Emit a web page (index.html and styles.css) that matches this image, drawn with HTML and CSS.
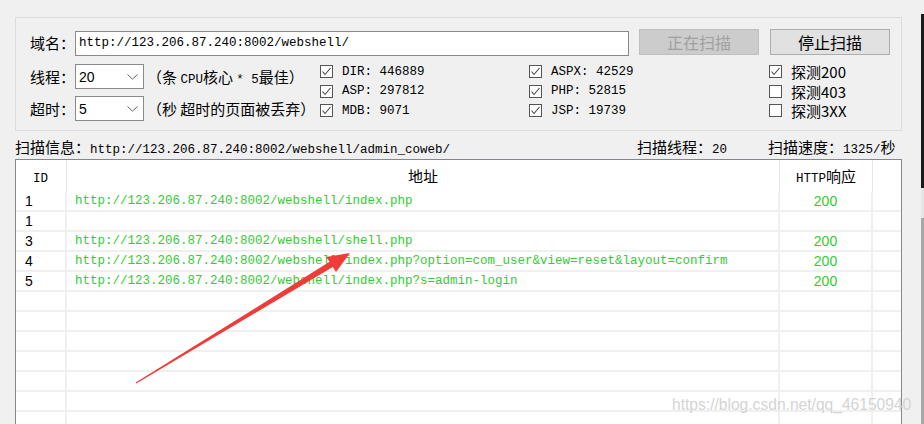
FILE: index.html
```html
<!DOCTYPE html>
<html lang="zh-CN">
<head>
    <meta charset="UTF-8">
    <meta name="viewport" content="width=device-width, initial-scale=1.0">
    <title>后台扫描</title>
    <link rel="stylesheet" href="styles.css">
</head>
<body>
    <div class="app">
        <div class="main">
            <!-- 扫描设置 -->
            <div class="group">
                <div class="row-top">
                    <span class="label">域名：</span>
                    <div class="url-input">http://123.206.87.240:8002/webshell/</div>
                    <button class="btn btn-disabled">正在扫描</button>
                    <button class="btn btn-stop">停止扫描</button>
                </div>
                <div class="row-options">
                    <div class="settings">
                        <div class="setting">
                            <span class="label">线程：</span>
                            <div class="combo">
                                <span>20</span>
                                <svg width="11" height="6" viewBox="0 0 11 6"><polyline points="0.5,0.5 5.5,5 10.5,0.5" fill="none" stroke="#606060" stroke-width="1"/></svg>
                            </div>
                            <span class="note">（条 <span class="mono">CPU</span>核心 <span class="mono">* 5</span>最佳）</span>
                        </div>
                        <div class="setting">
                            <span class="label">超时：</span>
                            <div class="combo">
                                <span>5</span>
                                <svg width="11" height="6" viewBox="0 0 11 6"><polyline points="0.5,0.5 5.5,5 10.5,0.5" fill="none" stroke="#606060" stroke-width="1"/></svg>
                            </div>
                            <span class="note">（秒 超时的页面被丢弃）</span>
                        </div>
                    </div>
                    <div class="checks">
                        <label class="check"><span class="box"><svg width="11" height="11" viewBox="0 0 11 11"><polyline points="1.5,5.5 4,8.5 9.5,2" fill="none" stroke="#444" stroke-width="1.1"/></svg></span><span class="mono">DIR: 446889</span></label>
                        <label class="check"><span class="box"><svg width="11" height="11" viewBox="0 0 11 11"><polyline points="1.5,5.5 4,8.5 9.5,2" fill="none" stroke="#444" stroke-width="1.1"/></svg></span><span class="mono">ASPX: 42529</span></label>
                        <label class="check"><span class="box"><svg width="11" height="11" viewBox="0 0 11 11"><polyline points="1.5,5.5 4,8.5 9.5,2" fill="none" stroke="#444" stroke-width="1.1"/></svg></span><span>探测200</span></label>
                        <label class="check"><span class="box"><svg width="11" height="11" viewBox="0 0 11 11"><polyline points="1.5,5.5 4,8.5 9.5,2" fill="none" stroke="#444" stroke-width="1.1"/></svg></span><span class="mono">ASP: 297812</span></label>
                        <label class="check"><span class="box"><svg width="11" height="11" viewBox="0 0 11 11"><polyline points="1.5,5.5 4,8.5 9.5,2" fill="none" stroke="#444" stroke-width="1.1"/></svg></span><span class="mono">PHP: 52815</span></label>
                        <label class="check"><span class="box"></span><span>探测403</span></label>
                        <label class="check"><span class="box"><svg width="11" height="11" viewBox="0 0 11 11"><polyline points="1.5,5.5 4,8.5 9.5,2" fill="none" stroke="#444" stroke-width="1.1"/></svg></span><span class="mono">MDB: 9071</span></label>
                        <label class="check"><span class="box"><svg width="11" height="11" viewBox="0 0 11 11"><polyline points="1.5,5.5 4,8.5 9.5,2" fill="none" stroke="#444" stroke-width="1.1"/></svg></span><span class="mono">JSP: 19739</span></label>
                        <label class="check"><span class="box"></span><span>探测3XX</span></label>
                    </div>
                </div>
            </div>

            <!-- 扫描状态 -->
            <div class="status">
                <span class="status-info">扫描信息：<span class="mono">http://123.206.87.240:8002/webshell/admin_coweb/</span></span>
                <span class="status-threads">扫描线程：<span class="mono">20</span></span>
                <span class="status-speed">扫描速度：<span class="mono">1325/</span>秒</span>
            </div>

            <!-- 结果列表 -->
            <div class="list">
                <div class="list-head">
                    <span class="col-id"><span class="mono">ID</span></span>
                    <span class="col-url">地址</span>
                    <span class="col-code"><span class="mono">HTTP</span>响应</span>
                    <span class="col-rest"></span>
                </div>
                <div class="list-row">
                    <span class="cell-id">1</span>
                    <span class="cell-url">http://123.206.87.240:8002/webshell/index.php</span>
                    <span class="cell-code">200</span>
                    <span class="cell-rest"></span>
                </div>
                <div class="list-row">
                    <span class="cell-id">1</span>
                    <span class="cell-url"></span>
                    <span class="cell-code"></span>
                    <span class="cell-rest"></span>
                </div>
                <div class="list-row">
                    <span class="cell-id">3</span>
                    <span class="cell-url">http://123.206.87.240:8002/webshell/shell.php</span>
                    <span class="cell-code">200</span>
                    <span class="cell-rest"></span>
                </div>
                <div class="list-row">
                    <span class="cell-id">4</span>
                    <span class="cell-url">http://123.206.87.240:8002/webshell/index.php?option=com_user&amp;view=reset&amp;layout=confirm</span>
                    <span class="cell-code">200</span>
                    <span class="cell-rest"></span>
                </div>
                <div class="list-row">
                    <span class="cell-id">5</span>
                    <span class="cell-url">http://123.206.87.240:8002/webshell/index.php?s=admin-login</span>
                    <span class="cell-code">200</span>
                    <span class="cell-rest"></span>
                </div>
                <div class="list-row"><span class="cell-id"></span><span class="cell-url"></span><span class="cell-code"></span><span class="cell-rest"></span></div>
                <div class="list-row"><span class="cell-id"></span><span class="cell-url"></span><span class="cell-code"></span><span class="cell-rest"></span></div>
                <div class="list-row"><span class="cell-id"></span><span class="cell-url"></span><span class="cell-code"></span><span class="cell-rest"></span></div>
                <div class="list-row"><span class="cell-id"></span><span class="cell-url"></span><span class="cell-code"></span><span class="cell-rest"></span></div>
                <div class="list-row"><span class="cell-id"></span><span class="cell-url"></span><span class="cell-code"></span><span class="cell-rest"></span></div>
                <div class="list-row"><span class="cell-id"></span><span class="cell-url"></span><span class="cell-code"></span><span class="cell-rest"></span></div>
                <div class="list-row"><span class="cell-id"></span><span class="cell-url"></span><span class="cell-code"></span><span class="cell-rest"></span></div>
            </div>
        </div>

        <!-- 窗口右侧边缘 -->
        <div class="edge">
            <div class="edge-gap"></div>
            <div class="edge-dark"></div>
            <div class="edge-light"></div>
            <div class="edge-grey"></div>
        </div>

        <!-- 标注箭头 -->
        <svg class="arrow" width="924" height="424" viewBox="0 0 924 424">
            <polygon points="136.3,383.4 332.8,267.0 336,272 350,253 326,257 329.6,261.8 135.7,382.6" fill="#f03c38"/>
        </svg>

        <div class="watermark">https://blog.csdn.net/qq_46150940</div>
    </div>
</body>
</html>
```

FILE: styles.css
```css
body {
    margin: 0;
    padding: 0;
    width: 924px;
    height: 424px;
    overflow: hidden;
    background-color: #f0f0f0;
    font-family: "Noto Sans CJK SC", sans-serif;
    font-size: 15px;
    color: #000000;
}

.mono {
    font-family: "Liberation Mono", "Noto Sans CJK SC", monospace;
    font-size: 12.5px;
}

.app {
    position: relative;
    display: flex;
    height: 424px;
}

.main {
    width: 921px;
    padding: 17px 0 0 15px;
    box-sizing: border-box;
}

/* 设置区 */
.group {
    width: 887px;
    height: 114px;
    box-sizing: border-box;
    border: 1px solid #dcdcdc;
    padding: 11px 0 0 14px;
}

.row-top {
    display: flex;
    height: 27px;
}

.label {
    width: 45px;
    line-height: 27px;
    flex-shrink: 0;
}

.url-input {
    width: 554px;
    height: 25px;
    margin-top: 2px;
    box-sizing: border-box;
    border: 1px solid #8a8a8a;
    background-color: #ffffff;
    padding-left: 3px;
    line-height: 23px;
    font-family: "Liberation Mono", monospace;
    font-size: 12.5px;
}

.btn {
    width: 120px;
    height: 26px;
    margin-left: 10px;
    padding: 0;
    box-sizing: border-box;
    border: 1px solid #adadad;
    background-color: #e1e1e1;
    font-family: "Noto Sans CJK SC", sans-serif;
    font-size: 16px;
    color: #000000;
}

.btn-disabled {
    background-color: #cccccc;
    border-color: #bfbfbf;
    color: #a0a0a0;
}

.btn-stop {
    margin-left: 11px;
}

.row-options {
    display: flex;
    margin-top: 8px;
}

.settings {
    width: 290px;
    display: flex;
    flex-direction: column;
    gap: 7px;
}

.setting {
    display: flex;
    align-items: center;
    height: 25px;
}

.combo {
    width: 69px;
    height: 25px;
    box-sizing: border-box;
    border: 1px solid #8a8a8a;
    background-color: #ffffff;
    display: flex;
    align-items: center;
    justify-content: space-between;
    padding: 0 5px 0 3px;
    font-family: "Liberation Sans", sans-serif;
    font-size: 14px;
}

.note {
    margin-left: 3px;
    white-space: nowrap;
}

.checks {
    display: grid;
    grid-template-columns: 209px 240px 1fr;
    grid-auto-rows: 19.5px;
    margin-top: -2px;
}

.check {
    display: flex;
    align-items: center;
    gap: 9px;
    white-space: nowrap;
}

.box {
    width: 13px;
    height: 13px;
    box-sizing: border-box;
    border: 1px solid #555555;
    background-color: #ffffff;
    display: flex;
    flex-shrink: 0;
}

/* 状态栏 */
.status {
    display: flex;
    align-items: center;
    width: 887px;
    height: 28px;
    padding-top: 3px;
    box-sizing: border-box;
    white-space: nowrap;
}

.status-info {
    width: 622px;
}

.status-threads {
    width: 131px;
}

/* 结果列表 */
.list {
    width: 887px;
    height: 270px;
    box-sizing: border-box;
    border: 1px solid #828790;
    background-color: #ffffff;
    overflow: hidden;
}

.list-head, .list-row {
    display: grid;
    grid-template-columns: 51px 713px 93px 28px;
}

.list-head {
    height: 32px;
}

.list-head > span {
    border-right: 1px solid #e5e5e5;
    text-align: center;
    line-height: 32px;
    white-space: nowrap;
}

.list-head .col-id {
    text-align: left;
    padding-left: 17px;
}

.list-head .col-rest {
    border-right: none;
}

.list-row {
    height: 20px;
    box-sizing: border-box;
    border-bottom: 2px solid #f0f0f0;
    line-height: 18px;
}

.list-row > span {
    border-right: 2px solid #f0f0f0;
    white-space: nowrap;
    overflow: hidden;
}

.list-row .cell-rest {
    border-right: none;
}

.cell-id {
    padding-left: 9px;
    font-family: "Liberation Sans", sans-serif;
    font-size: 14px;
}

.cell-url {
    padding-left: 8px;
    font-family: "Liberation Mono", monospace;
    font-size: 12.5px;
    color: #33cc33;
}

.cell-code {
    text-align: center;
    font-family: "Liberation Sans", sans-serif;
    font-size: 14px;
    color: #33cc33;
}

/* 右侧边缘 */
.edge {
    width: 3px;
    display: flex;
    flex-direction: column;
}

.edge-gap {
    height: 14px;
}

.edge-dark {
    height: 174px;
    background-color: #1a1a1a;
}

.edge-light {
    height: 30px;
    background-color: #e6e6e6;
}

.edge-grey {
    flex: 1;
    background-color: #a8a8a8;
}

.arrow {
    position: absolute;
    left: 0;
    top: 0;
    pointer-events: none;
}

.watermark {
    position: absolute;
    left: 672px;
    top: 396px;
    font-family: "Liberation Sans", sans-serif;
    font-size: 15.6px;
    color: #d4d4d4;
    white-space: nowrap;
}
```
